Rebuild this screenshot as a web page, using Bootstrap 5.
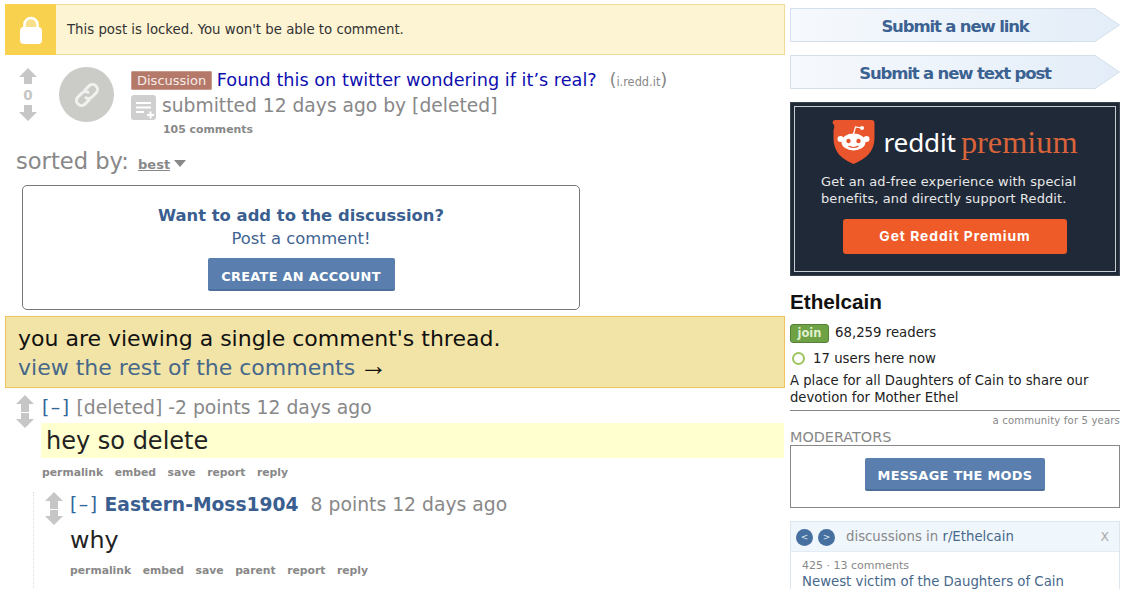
<!DOCTYPE html>
<html lang="en"><head><meta charset="utf-8"><title>Ethelcain</title>
<link href="https://cdn.jsdelivr.net/npm/bootstrap@5.3.0/dist/css/bootstrap.min.css" rel="stylesheet">
<style>
html,body{height:589px;overflow:hidden;background:#fff}
body{font-family:"DejaVu Sans",Verdana,sans-serif;color:#222;font-size:13px}
a{text-decoration:none}
.shell{width:1125px;height:589px;overflow:hidden;padding:4px 5px 0 5px;gap:5px}
.maincol{width:780px;flex:none}
.sidecol{width:330px;flex:none;padding-top:4px}
.lockbar{height:51px;background:#fdf4d3;border:1px solid #f0dc94}
.lockicon{width:51px;margin:-1px 0 -1px -1px;background:#f8d24f;padding-top:2px}
.locktext{font-size:13.3px;margin-left:11px;color:#333;padding-top:1px}
.post{margin-top:12px;height:83px}
.votes{width:46px;padding-top:1px}
.scorenum{font-size:13.5px;font-weight:700;color:#c6c6c6;line-height:15px;margin:4px 0 2px}
.thumb{width:55px;height:55px;border-radius:50%;background:#cbcbc8;margin-left:8px;flex:none}
.postbody{margin-left:17px;margin-top:2px;width:650px}
.flair{background:#b5796a;color:#f6ece8;font-size:13px;line-height:16px;padding:1px 5px;border-radius:2px;margin-right:-1px;border:1px solid #c89a8e;position:relative;top:-1px}
.ptitle{font-size:17.7px;color:#0f0fb0;line-height:21px;white-space:nowrap}
.pdomain{color:#888;font-size:11.4px;margin-left:7px}
.pdomain b{font-weight:400;font-size:18px}
.tagline{font-size:18.7px;color:#888;line-height:26px;white-space:nowrap}
.selficon{width:25px;height:25px;background:#cfcfcf;border-radius:3px;margin:2px 6px 0 0;flex:none}
.ccount{font-size:10.9px;font-weight:700;color:#888;margin-left:32px;line-height:13px;margin-top:3px}
.sortline{font-size:22.6px;color:#888;margin-left:11px;line-height:26px;margin-top:-2px}
.sortline u{font-size:13px;font-weight:700;margin-left:2px}
.sortarrow{display:inline-block;border:6.5px solid transparent;border-top:7px solid #888;border-bottom:0;vertical-align:2px;margin-left:-3px}
.cta{width:558px;height:125px;margin:7px 0 0 17px;border:1px solid #777;border-radius:5px;text-align:center}
.cta h6{font-size:16.4px;font-weight:700;margin:20px 0 0;color:#3a5e8f;line-height:20px}
.cta p{font-size:16.4px;margin:1px 0 0;color:#3f6391;line-height:24px}
.bluebtn{background:#5a7fae;border:0;border-bottom:2px solid #4c6f9d;color:#fff;font-weight:700;border-radius:2px;letter-spacing:.3px;display:block;margin-left:auto;margin-right:auto}
.cta .bluebtn{width:187px;height:33px;margin-top:7px;font-size:12.9px;padding:6px 0 0}
.single{height:72px;margin-top:6px;background:#f2e4a6;border:1px solid #efc35e;padding:7px 12px 0;font-size:22px;line-height:29px;color:#111;white-space:nowrap}
.single a{color:#47688a}
.single span{font-family:"Liberation Sans",sans-serif;font-size:28px;line-height:20px;color:#111;margin-left:-3px}
.c1{margin-top:7px;margin-left:11px}
.arrows{width:25px;flex:none}
.c1 .arrows{width:26px}
.chead{font-size:18.8px;color:#888;line-height:26px;white-space:nowrap}
.chead a{color:#369}
.collapsebtn{letter-spacing:1.5px}
.cbody1{background:#ffffd0;margin-top:2px;height:35px;margin-left:-1px;padding-left:5px;font-size:24px;line-height:37px;color:#222;width:743px}
.clinks{font-size:10.8px;font-weight:700;color:#888;display:flex;gap:11.5px;line-height:13px}
.c1 .clinks{margin-top:8px}
.c2wrap{margin:13px 0 0 28px;border-left:1px dotted #ddd;padding-left:11px;height:120px}
.chead .auth{color:#3a5e8f;font-weight:700;font-size:18.7px;margin-right:6px}
.c2body{font-size:23.8px;line-height:35px;color:#222;margin-top:5px}
.c2wrap .clinks{margin-top:6px}
.sub{height:34px;width:330px;display:block;text-align:center;font-weight:700;font-size:16.5px;line-height:37px;color:#3c6292;position:relative;margin-bottom:13px;letter-spacing:-1.15px}
.sub svg{position:absolute;left:0;top:0}
.sub span{position:relative}
.prem{height:174px;background:#1f2937;border:1px solid #3a4350;margin-top:0;padding:3px}
.preminner{height:100%;border:1px solid #c8ccd0;text-align:center;color:#e8e8e8}
.premlogo{height:52px;margin-top:9px;gap:8px}
.rtxt{font-family:"Noto Sans",sans-serif;font-size:26.2px;color:#fff;line-height:38px;letter-spacing:-.2px}
.ptxt{font-family:"Liberation Serif",serif;font-size:32.3px;color:#d9633a;line-height:38px;margin-left:1px}
.premcopy{font-size:12.96px;line-height:17px;margin:5px 0 0;padding-left:26px;letter-spacing:.12px;white-space:nowrap;text-align:left}
.premgo{display:block;width:224px;height:35px;background:#ee5a28;color:#fff;font-family:"Inter",sans-serif;font-size:13.8px;font-weight:700;line-height:35px;border-radius:3px;margin:12px auto 0;letter-spacing:1px}
.sname{font-family:"Liberation Sans",sans-serif;font-weight:700;font-size:20.7px;color:#111;margin-top:14px;line-height:24px}
.joinbtn{display:inline-block;background:#6fa244;border:1px solid #567f3a;color:#dff0cf;font-size:11.5px;font-weight:700;border-radius:3px;padding:0 6.5px;line-height:17px;margin-right:6px}
.rline{font-size:13.3px;margin-top:9px;line-height:19px;color:#222}
.uline{font-size:13.3px;margin-top:6px;line-height:19px;color:#222}
.greendot{display:inline-block;width:13px;height:13px;border:2px solid #9fc561;border-radius:50%;background:#fff;margin:0 8px 0 2px;vertical-align:-2px}
.sdesc{font-size:13.2px;line-height:17px;margin-top:4px;color:#222;white-space:normal}
.srule{border-top:1px solid #888;margin-top:4px;text-align:right;font-size:10.1px;color:#888;line-height:19px;height:15px;letter-spacing:.15px}
.modhead{font-size:14.4px;color:#888;line-height:17px;margin-top:4px}
.modbox{height:63px;border:1px solid #888;padding-top:12px;margin-top:-1px}
.modbox .bluebtn{width:180px;height:33px;font-size:12.9px;padding:4px 0 0}
.disc{margin-top:13px;border:1px solid #dce6ef;border-bottom:0;height:80px}
.dischead{height:30px;background:#eff6fc;border-bottom:1px solid #e3ecf3;color:#888;font-size:13.3px;padding:1px 10px 0 5px}
.dcirc{width:17px;height:17px;border-radius:50%;background:#46709f;color:#dfe8f2;font-size:9px;line-height:16px;text-align:center;margin-right:5px}
.dischead a{color:#47688a}
.dischead .closex{color:#aaa;font-size:12.4px}
.discgap{margin-left:6px}
.discbody{padding:6px 11px;font-size:11px;color:#888;line-height:16px}
.discbody a{font-size:13.3px;color:#47688a;display:block;white-space:nowrap;line-height:16px}
</style></head>
<body>
<div class="shell d-flex">
<div class="maincol">
  <div class="lockbar d-flex align-items-center">
    <div class="lockicon align-self-stretch d-flex align-items-center justify-content-center">
      <svg width="24" height="29" viewBox="0 0 24 29"><path d="M5.5 12V8.500a6.500 6.500 0 0 1 13 0V12" fill="#f8e08a" stroke="#fff" stroke-width="2.600"/><rect x="1" y="11" width="22" height="17" rx="4" fill="#fff"/></svg>
    </div>
    <div class="locktext">This post is locked. You won't be able to comment.</div>
  </div>
  <div class="post d-flex">
    <div class="votes d-flex flex-column align-items-center">
      <svg width="18" height="16" viewBox="0 0 18 16"><path d="M9 0 18 9H13V16H5V9H0Z" fill="#c6c6c6"/></svg>
      <div class="scorenum">0</div>
      <svg width="18" height="16" viewBox="0 0 18 16"><path d="M9 16 18 7H13V0H5V7H0Z" fill="#c6c6c6"/></svg>
    </div>
    <div class="thumb d-flex align-items-center justify-content-center">
      <svg width="30" height="30" viewBox="0 0 30 30" fill="none" stroke="#f1f1ef" stroke-width="3" stroke-linecap="round"><path d="M13 10 17.500 5.500a5 5 0 0 1 7 7L20 17a5 5 0 0 1-6 .8"/><path d="M17 20 12.500 24.500a5 5 0 0 1-7-7L10 13a5 5 0 0 1 6-.8"/></svg>
    </div>
    <div class="postbody">
      <div class="ptitle"><span class="flair">Discussion</span> Found this on twitter wondering if it’s real? <span class="pdomain"><b>(</b>i.redd.it<b>)</b></span></div>
      <div class="d-flex tagline">
        <div class="selficon d-flex align-items-center justify-content-center">
          <svg width="25" height="25" viewBox="0 0 25 25" stroke="#fff" stroke-width="2"><path d="M5 8H20M5 12.500H20M5 17H13M16 20H23M19.500 16.500V23.500"/></svg>
        </div>
        <div>submitted 12 days ago by [deleted]</div>
      </div>
      <div class="ccount">105 comments</div>
    </div>
  </div>
  <div class="sortline">sorted by: <u>best</u> <span class="sortarrow"></span></div>
  <div class="cta">
    <h6>Want to add to the discussion?</h6>
    <p>Post a comment!</p>
    <button class="bluebtn">CREATE AN ACCOUNT</button>
  </div>
  <div class="single">you are viewing a single comment's thread.<br><a href="#">view the rest of the comments <span>→</span></a></div>
  <div class="c1 d-flex">
    <div class="arrows d-flex flex-column align-items-start">
      <svg width="18" height="35" viewBox="0 0 18 35"><path d="M9 0 18 9H13V17H5V9H0Z" fill="#c6c6c6"/><path d="M9 33 18 24H13V18H5V24H0Z" fill="#c6c6c6"/></svg>
    </div>
    <div class="flex-grow-1">
      <div class="chead"><a href="#" class="collapsebtn">[–]</a> [deleted] -2 points 12 days ago</div>
      <div class="cbody1">hey so delete</div>
      <div class="clinks"><span>permalink</span><span>embed</span><span>save</span><span>report</span><span>reply</span></div>
    </div>
  </div>
  <div class="c2wrap d-flex">
    <div class="arrows d-flex flex-column align-items-start">
      <svg width="18" height="35" viewBox="0 0 18 35"><path d="M9 0 18 9H13V17H5V9H0Z" fill="#c6c6c6"/><path d="M9 33 18 24H13V18H5V24H0Z" fill="#c6c6c6"/></svg>
    </div>
    <div>
      <div class="chead"><a href="#" class="collapsebtn">[–]</a> <a href="#" class="auth">Eastern-Moss1904</a> 8 points 12 days ago</div>
      <div class="c2body">why</div>
      <div class="clinks"><span>permalink</span><span>embed</span><span>save</span><span>parent</span><span>report</span><span>reply</span></div>
    </div>
  </div>
</div>
<div class="sidecol">
  <a class="sub" href="#"><svg width="330" height="34" viewBox="0 0 330 34"><defs><linearGradient id="g1" x1="0" y1="0" x2="1" y2="0"><stop offset="0" stop-color="#f6f9fd"/><stop offset="1" stop-color="#e3edf8"/></linearGradient></defs><path d="M.5.5H305L329.500 17 305 33.500H.5Z" fill="url(#g1)" stroke="#d3dfea"/></svg><span>Submit a new link</span></a>
  <a class="sub" href="#"><svg width="330" height="34" viewBox="0 0 330 34"><path d="M.5.5H305L329.500 17 305 33.500H.5Z" fill="url(#g1)" stroke="#d3dfea"/></svg><span>Submit a new text post</span></a>
  <div class="prem">
    <div class="preminner">
      <div class="premlogo d-flex justify-content-center align-items-center">
        <svg width="43" height="44" viewBox="0 0 42 44"><path d="M3 0H39Q42 0 42 3V18C42 32 33 39 21 44 9 39 1 32 1 18V10Q3 6 0 3Q0 0 3 0Z" fill="#e9552c"/><ellipse cx="21" cy="22" rx="12" ry="8.500" fill="#fff"/><circle cx="8" cy="19" r="3" fill="#fff"/><circle cx="34" cy="19" r="3" fill="#fff"/><circle cx="16" cy="21" r="2.200" fill="#e9552c"/><circle cx="26" cy="21" r="2.200" fill="#e9552c"/><path d="M16 26Q21 29 26 26" stroke="#e9552c" fill="none" stroke-width="1.200"/><path d="M21 14 23 7 29 8" stroke="#fff" fill="none" stroke-width="1.200"/><circle cx="29.500" cy="8" r="2" fill="#fff"/></svg>
        <div class="d-flex"><span class="rtxt">reddit</span>&nbsp;<span class="ptxt">premium</span></div>
      </div>
      <div class="premcopy">Get an ad-free experience with special<br>benefits, and directly support Reddit.</div>
      <a class="premgo" href="#">Get Reddit Premium</a>
    </div>
  </div>
  <div class="sname">Ethelcain</div>
  <div class="rline"><span class="joinbtn">join</span>68,259 readers</div>
  <div class="uline"><span class="greendot"></span>17 users here now</div>
  <div class="sdesc">A place for all Daughters of Cain to share our devotion for Mother Ethel</div>
  <div class="srule">a community for 5 years</div>
  <div class="modhead">MODERATORS</div>
  <div class="modbox"><button class="bluebtn">MESSAGE THE MODS</button></div>
  <div class="disc">
    <div class="dischead d-flex align-items-center">
      <div class="dcirc">&lt;</div><div class="dcirc">&gt;</div>
      <div class="discgap">discussions in <a href="#">r/Ethelcain</a></div>
      <div class="ms-auto closex">X</div>
    </div>
    <div class="discbody">425 · 13 comments<a href="#">Newest victim of the Daughters of Cain</a></div>
  </div>
</div>
</div>
</body></html>
